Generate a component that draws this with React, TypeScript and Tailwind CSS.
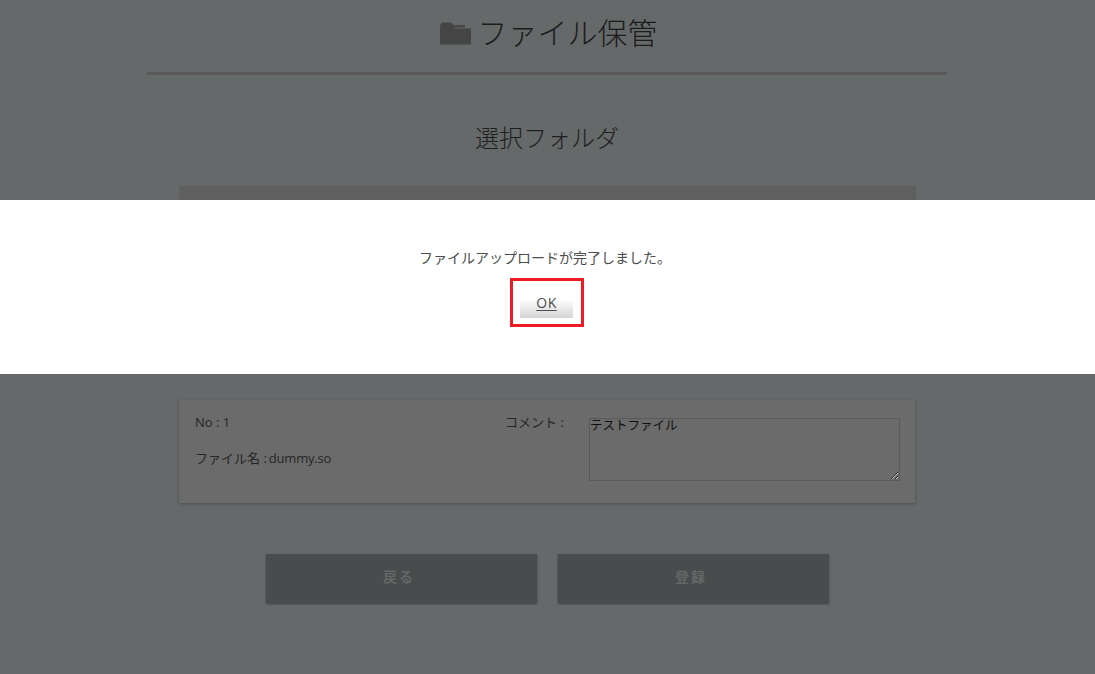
import React from "react";

const App = () => {
  return (
    <div className="relative h-[674px] overflow-hidden bg-[#656969] text-[#2f2f2f] font-['Open_Sans','Noto_Sans_CJK_JP',sans-serif]">
      <div className="ml-[147px] flex w-[800px] flex-col items-center">
        <h1 className="flex h-[72px] items-center gap-[7px] pb-[8px] text-[30px] font-light text-[#1c1c1c]">
          <svg width="31" height="24" viewBox="0 0 31 24" className="ml-[3px] mt-[2px]">
            <path d="M0 4.5 L2 1.5 H11 L13.5 4 H25 V6.5 H15 L13.5 7.5 H31 V23.5 H0 Z" fill="#454545" />
          </svg>
          ファイル保管
        </h1>
        <div className="h-[3px] w-full bg-[#5a5858]" />
        <h2 className="mt-[45px] text-[24px] font-light leading-[36px] text-[#1f1f1f]">選択フォルダ</h2>
        <div className="mt-[30px] h-[15px] w-[737px] bg-[#5f5f60]" />
      </div>

      <div className="absolute left-0 right-0 top-[200px] flex h-[174px] flex-col items-center bg-white pt-[48px] text-[#4c4c4c]">
        <p className="ml-[-5px] text-[14px] leading-[20px]">ファイルアップロードが完了しました。</p>
        <div className="mt-[10px] ml-[-1px] border-[3px] border-[#ed1c24] pb-[6px] pl-[7px] pr-[8px] pt-[6px]">
          <button className="block h-[31px] w-[53px] bg-gradient-to-b from-white from-40% to-[#d4d4d4] text-[14px] tracking-[0.5px] text-[#4c4c4c] underline underline-offset-2">
            OK
          </button>
        </div>
      </div>

      <div className="absolute left-[179px] top-[400px] flex h-[103px] w-[736px] bg-[#6b6b6b] text-[13px] text-[#262626] shadow-[0_1px_3px_rgba(0,0,0,0.25)]">
        <div className="w-[326px] pl-[16px] pt-[12px]">
          <p className="leading-[20px]">No : 1</p>
          <p className="mt-[16px] leading-[20px]">
            ファイル名 :<span className="ml-[2px] tracking-[-0.2px]">dummy.so</span>
          </p>
        </div>
        <div className="w-[84px] pt-[12px] leading-[20px]">コメント :</div>
        <div className="pt-[18px]">
          <textarea
            readOnly
            defaultValue="テストファイル"
            className="block h-[63px] w-[311px] border border-[#5a5a5a] bg-transparent text-[12.5px] leading-[14px] text-[#101010] outline-none"
          />
        </div>
      </div>

      <div className="absolute left-[266px] top-[554px] flex gap-[21px] text-[14px] font-bold tracking-[2px] text-[#656767]">
        <button className="h-[49px] w-[271px] bg-[#484c4c] pb-[4px] pr-[5px] shadow-[0_1px_2px_rgba(0,0,0,0.4)]">戻る</button>
        <button className="h-[49px] w-[271px] bg-[#484c4c] pb-[4px] pr-[5px] shadow-[0_1px_2px_rgba(0,0,0,0.4)]">登録</button>
      </div>
    </div>
  );
};

export default App;
